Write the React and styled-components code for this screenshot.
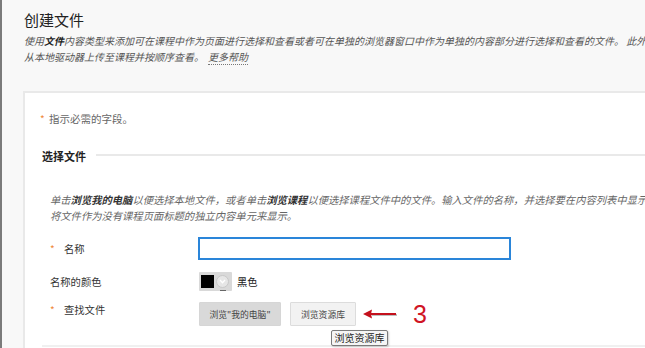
import React from "react";
import styled, { createGlobalStyle } from "styled-components";

const Global = createGlobalStyle`
  html, body { margin: 0; padding: 0; background: #f8f8f8; overflow: hidden; }
  body { font-family: "Noto Sans CJK SC", "Liberation Sans", sans-serif; }
`;

const Page = styled.div`
  display: flex;
  width: 645px;
  height: 348px;
  overflow: hidden;
  background: #f8f8f8;
`;

const SideEdge = styled.div`
  flex: 0 0 2px;
  background: #7b7b7b;
`;

const Main = styled.div`
  flex: 0 0 auto;
  width: 780px;
  padding: 10px 0 0 21px;
  box-sizing: border-box;
`;

const Header = styled.header`
  padding-left: 1px;
`;

const Title = styled.h1`
  margin: 0;
  font-size: 15px;
  line-height: 20px;
  font-weight: 400;
  color: #222;
`;

const Intro = styled.p`
  margin: 3px 0 0;
  font-size: 10px;
  line-height: 16px;
  font-style: italic;
  color: #555;
  b { color: #222; font-weight: 700; }
`;

const Line = styled.span`
  display: block;
  white-space: nowrap;
`;

const HelpLink = styled.a`
  margin-left: 4px;
  color: #555;
  text-decoration: none;
  border-bottom: 1px dotted #777;
`;

const Panel = styled.section`
  margin-top: 26px;
  background: #fff;
  border: 2px solid #e9e9e9;
  border-right: none;
  padding: 18px 0 0 15px;
  height: 300px;
`;

const Note = styled.div`
  font-size: 10.5px;
  line-height: 16px;
  color: #666;
`;

const Star = styled.span`
  display: inline-block;
  width: ${(p) => p.$w || 9}px;
  color: #f0883a;
  font-size: 10px;
`;

const SectionHead = styled.div`
  display: flex;
  align-items: center;
  gap: 10px;
  margin: 21px 0 0 2px;
  font-size: 11px;
  line-height: 16px;
  font-weight: 700;
  color: #222;
  &::after {
    content: "";
    flex: 1;
    height: 2px;
    margin-top: -3px;
    background: #e9e9e9;
  }
`;

const Fields = styled.div`
  padding-left: 10px;
`;

const Hint = styled.p`
  margin: 28px 0 0;
  font-size: 10.3px;
  line-height: 15.5px;
  font-style: italic;
  color: #666;
  b { color: #333; font-weight: 700; }
`;

const Row = styled.div`
  display: flex;
  align-items: ${(p) => p.$align || "center"};
  margin-top: ${(p) => p.$mt}px;
`;

const Label = styled.div`
  flex: 0 0 148px;
  display: flex;
  align-items: center;
  font-size: 10.3px;
  line-height: 16px;
  color: #333;
`;

const TextInput = styled.input`
  width: 313px;
  height: 23px;
  box-sizing: border-box;
  border: 2px solid #2a85d9;
  outline: none;
  background: #fff;
  padding: 0 4px;
  margin: 0;
`;

const Swatch = styled.div`
  margin-left: 1px;
  width: 33px;
  height: 19px;
  box-sizing: border-box;
  padding: 2px;
  display: flex;
  align-items: center;
  gap: 2px;
  background: #d9d9d9;
  border-radius: 1px;
`;

const ColorBox = styled.span`
  width: 13px;
  height: 13px;
  background: #000;
`;

const Chevron = styled.span`
  width: 13px;
  height: 13px;
  box-sizing: border-box;
  border-radius: 50%;
  background: #e6e6e6;
  border: 1px solid #c8c8c8;
  display: flex;
  align-items: center;
  justify-content: center;
  position: relative;
  &::after {
    content: "";
    position: absolute;
    bottom: -4px;
    left: 3px;
    width: 6px;
    height: 1px;
    background: #666;
  }
`;

const ColorName = styled.span`
  margin-left: 5px;
  font-size: 10.3px;
  color: #222;
`;

const Buttons = styled.div`
  margin-left: 1px;
  display: flex;
  align-items: center;
  gap: 9px;
`;

const Button = styled.button`
  position: relative;
  height: 24px;
  width: ${(p) => p.$w}px;
  box-sizing: border-box;
  padding: 0;
  font-family: "Noto Sans CJK SC", sans-serif;
  font-size: 8.8px;
  color: #444;
  background: ${(p) => (p.$primary ? "#d9d9d9" : "#f2f2f2")};
  border: 1px solid ${(p) => (p.$primary ? "#d6d6d6" : "#dcdcdc")};
  border-radius: 1px;
`;

const Tooltip = styled.span`
  position: absolute;
  left: 40px;
  top: 27px;
  width: 57px;
  height: 16px;
  box-sizing: border-box;
  background: #f5f5f5;
  border: 1px solid #7a7a7a;
  border-radius: 2px;
  font-size: 10px;
  line-height: 14px;
  color: #222;
  text-align: center;
  white-space: nowrap;
  box-shadow: 1px 1px 2px rgba(0, 0, 0, 0.2);
`;

const Arrow = styled.svg`
  margin-left: -3px;
  display: block;
`;

const Step = styled.span`
  margin-left: 6px;
  font-family: "Liberation Sans", sans-serif;
  font-size: 25px;
  line-height: 24px;
  color: #d01424;
`;

const Divider = styled.div`
  margin: 19px 0 0 -8px;
  height: 2px;
  background: #f0f0f0;
`;

export default function App() {
  return (
    <>
      <Global />
      <Page>
        <SideEdge />
        <Main>
          <Header>
            <Title>创建文件</Title>
            <Intro>
              <Line>
                使用<b>文件</b>内容类型来添加可在课程中作为页面进行选择和查看或者可在单独的浏览器窗口中作为单独的内容部分进行选择和查看的文件。 此外，您还可以
              </Line>
              <Line>
                从本地驱动器上传至课程并按顺序查看。
                <HelpLink>更多帮助</HelpLink>
              </Line>
            </Intro>
          </Header>
          <Panel>
            <Note>
              <Star>*</Star>指示必需的字段。
            </Note>
            <SectionHead>选择文件</SectionHead>
            <Fields>
              <Hint>
                <Line>
                  单击<b>浏览我的电脑</b>以便选择本地文件，或者单击<b>浏览课程</b>以便选择课程文件中的文件。输入文件的名称，并选择要在内容列表中显示
                </Line>
                <Line>将文件作为没有课程页面标题的独立内容单元来显示。</Line>
              </Hint>
              <Row $mt={14}>
                <Label>
                  <Star $w={14}>*</Star>名称
                </Label>
                <TextInput type="text" />
              </Row>
              <Row $mt={12}>
                <Label>名称的颜色</Label>
                <Swatch>
                  <ColorBox />
                  <Chevron>
                    <svg width="7" height="5" viewBox="0 0 7 5">
                      <path d="M1 1 L3.5 3.8 L6 1" fill="none" stroke="#ffffff" strokeWidth="1.3" />
                    </svg>
                  </Chevron>
                </Swatch>
                <ColorName>黑色</ColorName>
              </Row>
              <Row $mt={11} $align="flex-start">
                <Label>
                  <Star $w={14}>*</Star>查找文件
                </Label>
                <Buttons>
                  <Button $primary $w={82}>浏览"我的电脑"</Button>
                  <Button $w={66}>
                    浏览资源库
                    <Tooltip>浏览资源库</Tooltip>
                  </Button>
                  <Arrow width="36" height="14" viewBox="0 0 36 14">
                    <path d="M10 8 L35 8" stroke="rgba(0,0,0,0.25)" strokeWidth="2" />
                    <path d="M9 7 L34 7" stroke="#c4101c" strokeWidth="2" />
                    <path d="M1 7 L10 2.5 L9 7 L10 11.5 Z" fill="#c4101c" />
                  </Arrow>
                  <Step>3</Step>
                </Buttons>
              </Row>
              <Divider />
            </Fields>
          </Panel>
        </Main>
      </Page>
    </>
  );
}
